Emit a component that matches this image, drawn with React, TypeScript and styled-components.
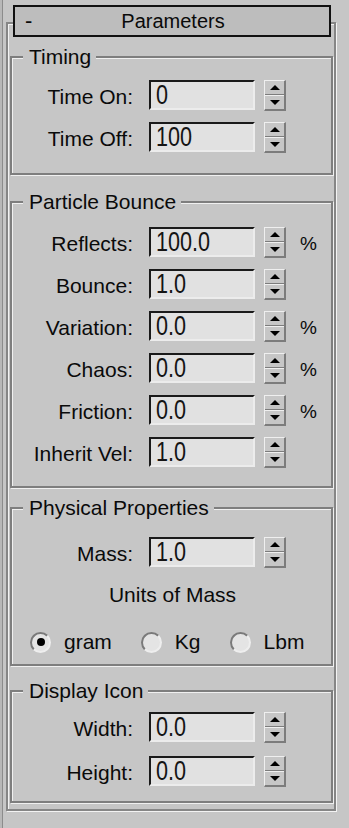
import React from 'react';
import styled, { createGlobalStyle } from 'styled-components';

const GlobalStyle = createGlobalStyle`
  html, body { margin: 0; padding: 0; background: #c6c6c6; }
  body { font-family: "Liberation Sans", Arial, sans-serif; color: #0a0a0a; }
`;

const Page = styled.div`
  width: 349px;
  height: 828px;
  box-sizing: border-box;
  padding: 22px 0 0 6px;
  box-shadow: inset 2px 0 0 #b8b8b8, inset 3px 0 0 #8c8c8c;
  overflow: hidden;
`;

const Rollout = styled.section`
  width: 330px;
  height: 789px;
  box-sizing: border-box;
  border: 2px solid #868686;
  box-shadow: inset 1px 1px 0 #f3f3f3, 1px 1px 0 #f3f3f3;
  display: flex;
  flex-direction: column;
`;

const Header = styled.header`
  margin: -19px 3px 0 5px;
  height: 32px;
  box-sizing: border-box;
  border: 2px solid #111;
  background: #bdbdbd;
  display: grid;
  grid-template-columns: 1fr auto 1fr;
  align-items: center;
  font-size: 20px;
  line-height: 24px;
`;

const Toggle = styled.span`
  justify-self: start;
  padding-left: 10px;
  font-size: 22px;
`;

const Title = styled.span`
  padding-left: 2px;
`;

const Group = styled.fieldset<{ $mt: number; $pt: number; $pb: number; $gap?: number }>`
  margin: ${(p) => p.$mt}px 1px 0 2px;
  padding: ${(p) => p.$pt}px 0 ${(p) => p.$pb}px 0;
  border: 2px solid #7e7e7e;
  box-shadow: inset 1px 1px 0 #f0f0f0, 1px 1px 0 #f0f0f0;
  min-width: 0;
  display: flex;
  flex-direction: column;
  gap: ${(p) => p.$gap ?? 11}px;
`;

const Legend = styled.legend`
  margin-left: 11px;
  padding: 0 5px 0 6px;
  font-size: 21px;
  line-height: 24px;
  background: #c6c6c6;
`;

const Row = styled.div`
  display: flex;
  align-items: flex-start;
  height: 31px;
`;

const Label = styled.span`
  flex: none;
  width: 121px;
  margin-right: 16px;
  padding-top: 2px;
  text-align: right;
  font-size: 21px;
  line-height: 30px;
  white-space: nowrap;
`;

const Field = styled.div`
  flex: none;
  width: 106px;
  height: 30px;
  box-sizing: border-box;
  margin-right: 9px;
  padding-left: 5px;
  border-style: solid;
  border-width: 2px;
  border-color: #1a1a1a #ececec #ececec #1a1a1a;
  background: #e1e1e1;
  display: flex;
  align-items: center;
  overflow: hidden;
`;

const FieldText = styled.span`
  display: inline-block;
  font-size: 27px;
  line-height: 1;
  transform: scaleX(0.8);
  transform-origin: left center;
  color: #141414;
`;

const Spinner = styled.div`
  flex: none;
  width: 22px;
  height: 31px;
  box-sizing: border-box;
  margin-right: 14px;
  display: flex;
  flex-direction: column;
  border-style: solid;
  border-width: 1px 2px 2px 1px;
  border-color: #efefef #7c7c7c #7c7c7c #efefef;
`;

const SpinHalf = styled.div<{ $down?: boolean }>`
  flex: 1;
  display: flex;
  align-items: center;
  justify-content: center;
  border-top: ${(p) => (p.$down ? '1px solid #efefef' : 'none')};
  border-bottom: ${(p) => (p.$down ? 'none' : '1px solid #7c7c7c')};
`;

const Arrow = styled.span<{ $down?: boolean }>`
  width: 0;
  height: 0;
  border-left: 5px solid transparent;
  border-right: 5px solid transparent;
  ${(p) => (p.$down ? 'border-top: 5px solid #000;' : 'border-bottom: 5px solid #000;')}
`;

const Percent = styled.span`
  font-size: 19px;
  line-height: 30px;
  padding-top: 2px;
`;

const CenterText = styled.div<{ $mt: number }>`
  margin-top: ${(p) => p.$mt}px;
  text-align: center;
  font-size: 21px;
  line-height: 24px;
  padding-left: 2px;
`;

const RadioRow = styled.div<{ $mt: number }>`
  margin-top: ${(p) => p.$mt}px;
  display: flex;
  align-items: center;
  height: 24px;
  padding-left: 18px;
  gap: 29px;
`;

const RadioItem = styled.label`
  display: flex;
  align-items: center;
  gap: 13px;
  font-size: 21px;
  line-height: 24px;
`;

const RadioCircle = styled.span`
  width: 21px;
  height: 21px;
  box-sizing: border-box;
  border-radius: 50%;
  border: 2px solid;
  border-color: #7a7a7a #eeeeee #eeeeee #7a7a7a;
  background: #e4e4e4;
  display: flex;
  align-items: center;
  justify-content: center;
`;

const Dot = styled.span`
  width: 8px;
  height: 8px;
  border-radius: 50%;
  background: #000;
`;

const Stack = styled.div<{ $gap: number }>`
  display: flex;
  flex-direction: column;
  gap: ${(p) => p.$gap}px;
`;

type ParamProps = { label: string; value: string; pct?: boolean };

const Param = ({ label, value, pct }: ParamProps) => (
  <Row>
    <Label>{label}</Label>
    <Field>
      <FieldText>{value}</FieldText>
    </Field>
    <Spinner>
      <SpinHalf>
        <Arrow />
      </SpinHalf>
      <SpinHalf $down>
        <Arrow $down />
      </SpinHalf>
    </Spinner>
    {pct && <Percent>%</Percent>}
  </Row>
);

const Radio = ({ label, checked }: { label: string; checked?: boolean }) => (
  <RadioItem>
    <RadioCircle>{checked && <Dot />}</RadioCircle>
    {label}
  </RadioItem>
);

export default function App() {
  return (
    <>
      <GlobalStyle />
      <Page>
        <Rollout>
          <Header>
            <Toggle>-</Toggle>
            <Title>Parameters</Title>
            <span />
          </Header>

          <Group $mt={8} $pt={11} $pb={20}>
            <Legend>Timing</Legend>
            <Param label="Time On:" value="0" />
            <Param label="Time Off:" value="100" />
          </Group>

          <Group $mt={15} $pt={13} $pb={18}>
            <Legend>Particle Bounce</Legend>
            <Param label="Reflects:" value="100.0" pct />
            <Param label="Bounce:" value="1.0" />
            <Param label="Variation:" value="0.0" pct />
            <Param label="Chaos:" value="0.0" pct />
            <Param label="Friction:" value="0.0" pct />
            <Param label="Inherit Vel:" value="1.0" />
          </Group>

          <Group $mt={8} $pt={17} $pb={10} $gap={0}>
            <Legend>Physical Properties</Legend>
            <Param label="Mass:" value="1.0" />
            <CenterText $mt={15}>Units of Mass</CenterText>
            <RadioRow $mt={23}>
              <Radio label="gram" checked />
              <Radio label="Kg" />
              <Radio label="Lbm" />
            </RadioRow>
          </Group>

          <Group $mt={13} $pt={9} $pb={14} $gap={13}>
            <Legend>Display Icon</Legend>
            <Stack $gap={13}>
              <Param label="Width:" value="0.0" />
              <Param label="Height:" value="0.0" />
            </Stack>
          </Group>
        </Rollout>
      </Page>
    </>
  );
}
